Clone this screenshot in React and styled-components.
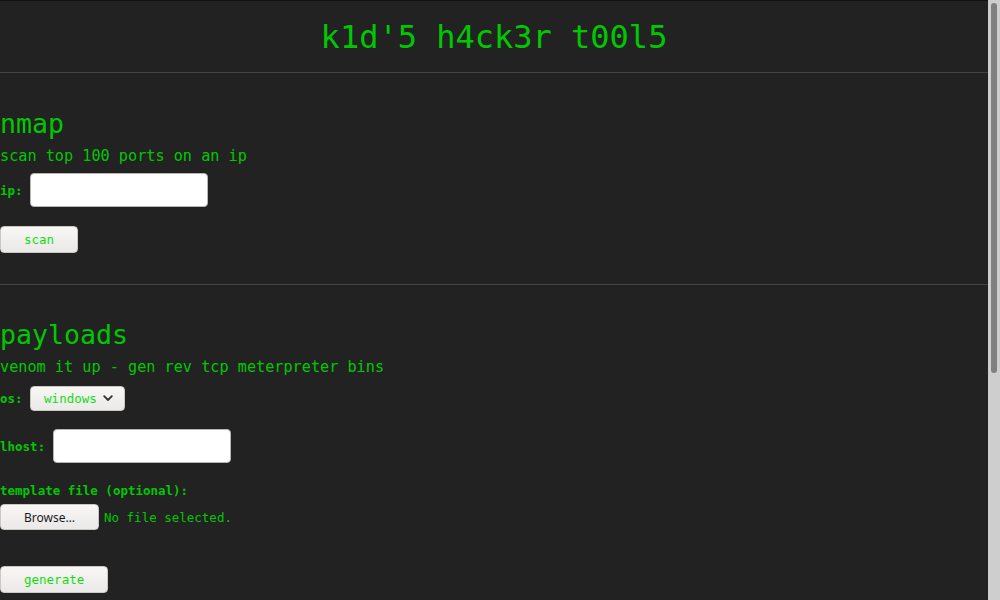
import styled, { createGlobalStyle } from "styled-components"

const GlobalStyle = createGlobalStyle`
    html {
        background: #222;
    }

    body {
        margin: 0 12px 0 0;
        background: #222;
        border-top: 1px solid #111;
        color: #00c800;
        font-family: "DejaVu Sans Mono", monospace;
        font-size: 15.2px;
    }
`

// the page scrolls, the browser's bar is hidden in the shot, so draw it
const ScrollTrack = styled.div`
    position: fixed;
    top: 0;
    right: 0;
    width: 12px;
    height: 100vh;
    background: #cecece;
`

const ScrollThumb = styled.div`
    margin: 3px auto 0;
    width: 6px;
    height: 370px;
    border-radius: 3px;
    background: #808080;
`

const Header = styled.header`
    height: 72px;
    padding-top: 18px;
    box-sizing: border-box;
    border-bottom: 1px solid #444;

    h1 {
        margin: 0;
        font-size: 32px;
        font-weight: normal;
        line-height: 37px;
        text-align: center;
    }
`

const Section = styled.section`
    padding-bottom: ${p => p.$bottom || 0}px;
    border-bottom: ${p => (p.$line ? "1px solid #444" : "none")};
`

const Title = styled.h2`
    margin: ${p => p.$top}px 0 0;
    font-size: 26.6px;
    font-weight: normal;
    line-height: 31px;
`

const Desc = styled.p`
    margin: 8px 0 0;
    line-height: 18px;
`

const Row = styled.div`
    display: flex;
    align-items: center;
    gap: ${p => (p.$gap === undefined ? 7.5 : p.$gap)}px;
    margin-top: ${p => p.$top}px;
`

const Label = styled.label`
    display: block;
    font-size: 12.5px;
    font-weight: bold;
    line-height: 15px;
    margin-top: ${p => p.$top || 0}px;
`

const TextInput = styled.input`
    width: 178px;
    height: 34px;
    box-sizing: border-box;
    background: #fff;
    border: 1px solid #b8b4b0;
    border-radius: 4px;
    padding: 0 8px;
    font-family: "DejaVu Sans Mono", monospace;
    outline: none;
`

const Button = styled.button`
    height: ${p => p.$h || 27}px;
    box-sizing: border-box;
    padding: 0 ${p => (p.$pad === undefined ? 23 : p.$pad)}px;
    width: ${p => (p.$w ? p.$w + "px" : "auto")};
    background: linear-gradient(#f8f7f6, #ebe9e7);
    border: 1px solid #cdc7c2;
    border-radius: 4px;
    color: ${p => (p.$dark ? "#1a1a1a" : "#11dd11")};
    font-family: ${p => (p.$dark ? '"Noto Sans", sans-serif' : '"DejaVu Sans Mono", monospace')};
    font-size: ${p => (p.$dark ? 12 : 12.5)}px;
    cursor: pointer;
`

const SelectWrap = styled.div`
    position: relative;
    display: inline-block;

    select {
        appearance: none;
        width: 95px;
        height: 25px;
        box-sizing: border-box;
        padding: 0 0 0 13px;
        background: linear-gradient(#f8f7f6, #ebe9e7);
        border: 1px solid #cdc7c2;
        border-radius: 4px;
        color: #11dd11;
        font-family: "DejaVu Sans Mono", monospace;
        font-size: 12.5px;
        outline: none;
    }

    svg {
        position: absolute;
        left: 73px;
        top: 9px;
        pointer-events: none;
    }
`

const FileName = styled.span`
    font-size: 12.5px;
    line-height: 15px;
`

const Main = styled.main`
    padding-bottom: 377px;
`

function Chevron() {
    return (
        <svg width="10" height="7" viewBox="0 0 10 7">
            <path d="M1.2 1.2 L5 5 L8.8 1.2" fill="none" stroke="#333" strokeWidth="1.8" strokeLinecap="round" strokeLinejoin="round" />
        </svg>
    )
}

export default function App() {
    return (
        <>
            <GlobalStyle />
            <Header>
                <h1>k1d'5 h4ck3r t00l5</h1>
            </Header>
            <Main>
                <Section $line $bottom={31}>
                    <Title $top={35}>nmap</Title>
                    <Desc>scan top 100 ports on an ip</Desc>
                    <Row $top={8}>
                        <Label htmlFor="ip">ip:</Label>
                        <TextInput id="ip" type="text" />
                    </Row>
                    <Row $top={19}>
                        <Button type="button">scan</Button>
                    </Row>
                </Section>

                <Section>
                    <Title $top={34}>payloads</Title>
                    <Desc>venom it up - gen rev tcp meterpreter bins</Desc>
                    <Row $top={10}>
                        <Label htmlFor="os">os:</Label>
                        <SelectWrap>
                            <select id="os" defaultValue="windows">
                                <option value="windows">windows</option>
                                <option value="linux">linux</option>
                                <option value="osx">osx</option>
                            </select>
                            <Chevron />
                        </SelectWrap>
                    </Row>
                    <Row $top={18}>
                        <Label htmlFor="lhost">lhost:</Label>
                        <TextInput id="lhost" type="text" />
                    </Row>
                    <Label $top={20}>template file (optional):</Label>
                    <Row $top={6} $gap={5}>
                        <Button type="button" $dark $h={26} $w={99} $pad={0}>Browse…</Button>
                        <FileName>No file selected.</FileName>
                    </Row>
                    <Row $top={36}>
                        <Button type="button">generate</Button>
                    </Row>
                </Section>
            </Main>
            <ScrollTrack>
                <ScrollThumb />
            </ScrollTrack>
        </>
    )
}
